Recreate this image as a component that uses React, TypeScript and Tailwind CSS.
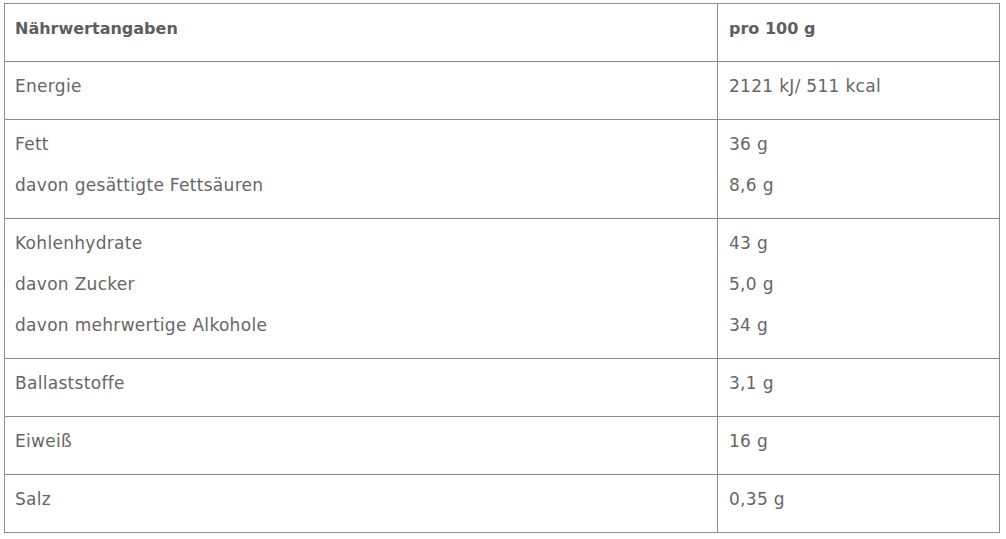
import React from "react";

const rows: { left: string[]; right: string[] }[] = [
  { left: ["Energie"], right: ["2121 kJ/ 511 kcal"] },
  { left: ["Fett", "davon gesättigte Fettsäuren"], right: ["36 g", "8,6 g"] },
  {
    left: ["Kohlenhydrate", "davon Zucker", "davon mehrwertige Alkohole"],
    right: ["43 g", "5,0 g", "34 g"],
  },
  { left: ["Ballaststoffe"], right: ["3,1 g"] },
  { left: ["Eiweiß"], right: ["16 g"] },
  { left: ["Salz"], right: ["0,35 g"] },
];

function Cell({ lines, bold, first }: { lines: string[]; bold?: boolean; first?: boolean }) {
  return (
    <td
      className={
        "border border-[#8c8c8c] align-top pt-[4px] pb-[12px] " +
        (first ? "pl-[10px] w-[713px]" : "pl-[11px]")
      }
    >
      {lines.map((l, i) => (
        <div
          key={i}
          className={
            "leading-[41px] whitespace-nowrap " +
            (bold ? "font-bold text-[16px] tracking-[0px] text-[#5e5e5e]" : "tracking-[0.3px]")
          }
        >
          {l}
        </div>
      ))}
    </td>
  );
}

export default function App() {
  return (
    <div className="w-[1006px] h-[539px] bg-white pt-[3px] pl-[4px]">
      <table
        className="border-collapse w-[996px] text-[17px] text-[#666666]"
        style={{ fontFamily: '"DejaVu Sans", sans-serif' }}
      >
        <tbody>
          <tr>
            <Cell lines={["Nährwertangaben"]} bold first />
            <Cell lines={["pro 100 g"]} bold />
          </tr>
          {rows.map((r, i) => (
            <tr key={i}>
              <Cell lines={r.left} first />
              <Cell lines={r.right} />
            </tr>
          ))}
        </tbody>
      </table>
    </div>
  );
}
